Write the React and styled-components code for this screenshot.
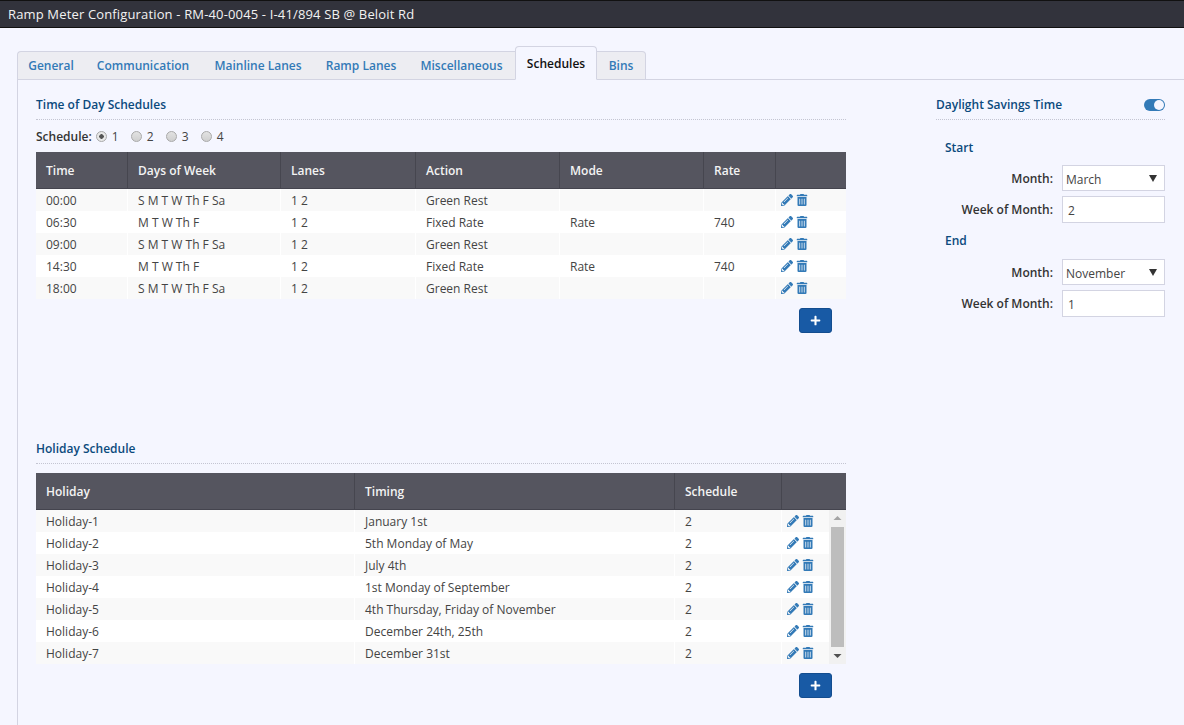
import React from 'react';
import styled, { createGlobalStyle } from 'styled-components';
import { FaPencilAlt, FaTrashAlt, FaPlus } from 'react-icons/fa';

const Global = createGlobalStyle`
  html, body { margin: 0; padding: 0; background: #f5f6ff; }
  body { font-family: "Open Sans", "Noto Sans", sans-serif; font-size: 12px; color: #3a3a3a; }
  * { box-sizing: border-box; }
`;

const Page = styled.div`width: 1184px; height: 725px; overflow: hidden; background: #f5f6ff;`;
const TitleBar = styled.header`
  height: 28px; background: #32333c; border-top: 1px solid #111; border-bottom: 1px solid #111;
  color: #f2f2f2; font-size: 13px; line-height: 26px; padding-left: 8px; letter-spacing: .15px;
`;
const Workspace = styled.div`padding: 18px 0 0 17px;`;
const TabBar = styled.nav`
  display: flex; align-items: flex-end; height: 34px; border-bottom: 1px solid #d3d4e2;
`;
const Tab = styled.a`
  width: ${p => p.$w}px; height: ${p => p.$active ? 34 : 29}px; margin-bottom: -1px;
  display: flex; align-items: center; justify-content: center;
  font-size: 12px; font-weight: 600; color: ${p => p.$active ? '#111' : '#337ab7'};
  background: ${p => p.$active ? '#f5f6ff' : '#ededf2'};
  border: 1px solid #d3d4e2; border-bottom: ${p => p.$active ? '1px solid #f5f6ff' : '1px solid #d3d4e2'};
  border-left: ${p => p.$first || p.$active ? '1px solid #d3d4e2' : 'none'};
  border-right: ${p => p.$active || p.$last ? '1px solid #d3d4e2' : 'none'};
  border-radius: ${p => p.$first ? '4px 0 0 0' : p.$last ? '0 4px 0 0' : p.$active ? '4px 4px 0 0' : '0'};
`;
const Content = styled.div`
  display: flex; border-left: 1px solid #d3d4e2; height: 646px; padding: 14px 19px 0 18px;
`;
const LeftColumn = styled.section`width: 810px; flex: none;`;
const RightColumn = styled.aside`width: 229px; margin-left: 90px; flex: none;`;
const SectionHead = styled.div`
  height: 26px; display: flex; align-items: center; justify-content: space-between;
  border-bottom: 1px dotted #c4c5d2; padding-bottom: 4px;
`;
const SectionTitle = styled.h2`margin: 0; font-size: 12px; font-weight: 600; color: #0b4a7d; line-height: 20px;`;
const RadioRow = styled.div`display: flex; align-items: center; height: 32px; font-size: 12px;`;
const BoldLabel = styled.span`font-weight: 600; color: #333; margin-right: 4px;`;
const RadioLabel = styled.label`display: flex; align-items: center; width: 35px; color: #444;`;
const Radio = styled.input.attrs({ type: 'radio' })`
  appearance: none; width: 11px; height: 11px; margin: 0 5px 0 0; border-radius: 50%;
  border: 1px solid #a9a9a9; background: ${p => p.checked
    ? 'radial-gradient(circle, #555 0 2px, #e8e8e8 2.5px)' : 'linear-gradient(#e2e2e2, #cfcfcf)'};
`;
const Grid = styled.div`background: #fff;`;
const HeadRow = styled.div`
  display: grid; grid-template-columns: ${p => p.$cols}; height: 37px; background: #55555f;
  border-bottom: 1px solid #44444e;
`;
const HeadCell = styled.div`
  display: flex; align-items: center; padding-left: 10px; color: #f3f3f3; font-weight: 600; font-size: 12px;
  border-right: 1px solid #46464f;
  &:last-child { border-right: none; }
`;
const BodyRow = styled.div`
  display: grid; grid-template-columns: ${p => p.$cols}; height: 22px;
  background: ${p => p.$odd ? '#f9f9f9' : '#fff'};
`;
const Cell = styled.div`
  display: flex; align-items: center; padding-left: 10px; font-size: 12px; color: #444; white-space: nowrap;
  border-right: 1px solid #fff;
  &:last-child { border-right: none; }
`;
const ActionCell = styled.div`display: flex; align-items: center; gap: 3px; padding-left: 5px; color: #337ab7;`;
const ScrollBody = styled.div`display: flex;`;
const Rows = styled.div`flex: 1; min-width: 0;`;
const Scrollbar = styled.div`
  width: 17px; background: #f1f1f1; display: flex; flex-direction: column; align-items: center;
`;
const Arrow = styled.svg`width: 17px; height: 17px; flex: none; fill: ${p => p.$up ? '#a3a3a3' : '#505050'};`;
const Thumb = styled.div`width: 13px; flex: 1; background: #bdbdbd;`;
const AddRow = styled.div`display: flex; justify-content: flex-end; padding: 9px 14px 0 0;`;
const AddButton = styled.button`
  width: 33px; height: 25px; padding: 0; display: flex; align-items: center; justify-content: center;
  background: #185aa5; border: 1px solid #134d8f; border-radius: 3px; color: #fff;
`;
const HolidaySection = styled.div`margin-top: 105px;`;
const HolidayGrid = styled(Grid)`margin-top: 9px;`;
const Toggle = styled.span`
  width: 21px; height: 12px; border-radius: 6px; background: #337ab7; display: flex; align-items: center;
  justify-content: flex-end; padding-right: 1px;
`;
const Knob = styled.span`width: 10px; height: 10px; border-radius: 50%; background: #f5f6ff;`;
const DstForm = styled.div`padding-top: 18px;`;
const GroupTitle = styled.h3`margin: 0; padding-left: 9px; font-size: 12px; font-weight: 600; color: #0b4a7d; line-height: 20px;`;
const FieldRow = styled.label`
  display: grid; grid-template-columns: 117px 103px; column-gap: 9px; align-items: center; margin-top: ${p => p.$gap}px;
`;
const FieldLabel = styled.span`text-align: right; font-weight: 600; color: #333;`;
const Select = styled.select`
  appearance: none; width: 103px; height: 26px; padding: 2px 0 0 3px; border: 1px solid #d3d4e2; border-radius: 0;
  background: #fff url("data:image/svg+xml,%3Csvg xmlns='http://www.w3.org/2000/svg' width='8' height='7'%3E%3Cpath d='M0 0h8L4 7z' fill='%23333'/%3E%3C/svg%3E") no-repeat right 7px top 9px;
  font: 12px "Open Sans", sans-serif; color: #444;
`;
const Input = styled.input`
  width: 103px; height: 27px; padding: 1px 0 0 5px; border: 1px solid #d3d4e2; border-radius: 0; background: #fff;
  font: 12px "Open Sans", sans-serif; color: #444; outline: none;
`;

const tabs = [['General',67],['Communication',118],['Mainline Lanes',112],['Ramp Lanes',94],['Miscellaneous',107],['Schedules',82],['Bins',49]];
const cols1 = '92px 153px 135px 144px 144px 72px 70px';
const cols2 = '319px 320px 107px 64px';
const cols2b = '319px 320px 107px 47px';
const all = 'S M T W Th F Sa', wk = 'M T W Th F';
const schedule = [
  ['00:00', all, '1 2', 'Green Rest', '', ''],
  ['06:30', wk, '1 2', 'Fixed Rate', 'Rate', '740'],
  ['09:00', all, '1 2', 'Green Rest', '', ''],
  ['14:30', wk, '1 2', 'Fixed Rate', 'Rate', '740'],
  ['18:00', all, '1 2', 'Green Rest', '', ''],
];
const holidays = [
  ['Holiday-1','January 1st'],['Holiday-2','5th Monday of May'],['Holiday-3','July 4th'],
  ['Holiday-4','1st Monday of September'],['Holiday-5','4th Thursday, Friday of November'],
  ['Holiday-6','December 24th, 25th'],['Holiday-7','December 31st'],
];

const Actions = () => (
  <ActionCell>
    <FaPencilAlt size={12} />
    <FaTrashAlt size={12} />
  </ActionCell>
);

const Add = () => (
  <AddRow><AddButton aria-label="Add"><FaPlus size={11} /></AddButton></AddRow>
);

export default function App() {
  return (
    <Page>
      <Global />
      <TitleBar>Ramp Meter Configuration - RM-40-0045 - I-41/894 SB @ Beloit Rd</TitleBar>
      <Workspace>
        <TabBar>
          {tabs.map(([t, w], i) => (
            <Tab key={t} $w={w} $first={i === 0} $last={i === tabs.length - 1} $active={t === 'Schedules'}>{t}</Tab>
          ))}
        </TabBar>
        <Content>
          <LeftColumn>
            <SectionHead><SectionTitle>Time of Day Schedules</SectionTitle></SectionHead>
            <RadioRow>
              <BoldLabel>Schedule:</BoldLabel>
              {[1,2,3,4].map(n => (
                <RadioLabel key={n}><Radio name="s" checked={n === 1} readOnly />{n}</RadioLabel>
              ))}
            </RadioRow>
            <Grid>
              <HeadRow $cols={cols1}>
                {['Time','Days of Week','Lanes','Action','Mode','Rate',''].map((h, i) => <HeadCell key={i}>{h}</HeadCell>)}
              </HeadRow>
              {schedule.map((r, i) => (
                <BodyRow key={i} $cols={cols1} $odd={i % 2 === 0}>
                  {r.map((c, j) => <Cell key={j}>{c}</Cell>)}
                  <Actions />
                </BodyRow>
              ))}
            </Grid>
            <Add />
            <HolidaySection>
              <SectionHead><SectionTitle>Holiday Schedule</SectionTitle></SectionHead>
              <HolidayGrid>
                <HeadRow $cols={cols2}>
                  {['Holiday','Timing','Schedule',''].map((h, i) => <HeadCell key={i}>{h}</HeadCell>)}
                </HeadRow>
                <ScrollBody>
                  <Rows>
                    {holidays.map((r, i) => (
                      <BodyRow key={i} $cols={cols2b} $odd={i % 2 === 0}>
                        <Cell>{r[0]}</Cell><Cell>{r[1]}</Cell><Cell>2</Cell>
                        <Actions />
                      </BodyRow>
                    ))}
                  </Rows>
                  <Scrollbar>
                    <Arrow $up viewBox="0 0 17 17"><path d="M4.5 10L8.5 6l4 4z" /></Arrow>
                    <Thumb />
                    <Arrow viewBox="0 0 17 17"><path d="M4.5 7l4 4 4-4z" /></Arrow>
                  </Scrollbar>
                </ScrollBody>
              </HolidayGrid>
              <Add />
            </HolidaySection>
          </LeftColumn>
          <RightColumn>
            <SectionHead>
              <SectionTitle>Daylight Savings Time</SectionTitle>
              <Toggle><Knob /></Toggle>
            </SectionHead>
            <DstForm>
              <GroupTitle>Start</GroupTitle>
              <FieldRow $gap={7}><FieldLabel>Month:</FieldLabel>
                <Select defaultValue="March"><option>March</option></Select></FieldRow>
              <FieldRow $gap={5}><FieldLabel>Week of Month:</FieldLabel><Input defaultValue="2" /></FieldRow>
              <GroupTitle style={{ marginTop: 8 }}>End</GroupTitle>
              <FieldRow $gap={8}><FieldLabel>Month:</FieldLabel>
                <Select defaultValue="November"><option>November</option></Select></FieldRow>
              <FieldRow $gap={5}><FieldLabel>Week of Month:</FieldLabel><Input defaultValue="1" /></FieldRow>
            </DstForm>
          </RightColumn>
        </Content>
      </Workspace>
    </Page>
  );
}
